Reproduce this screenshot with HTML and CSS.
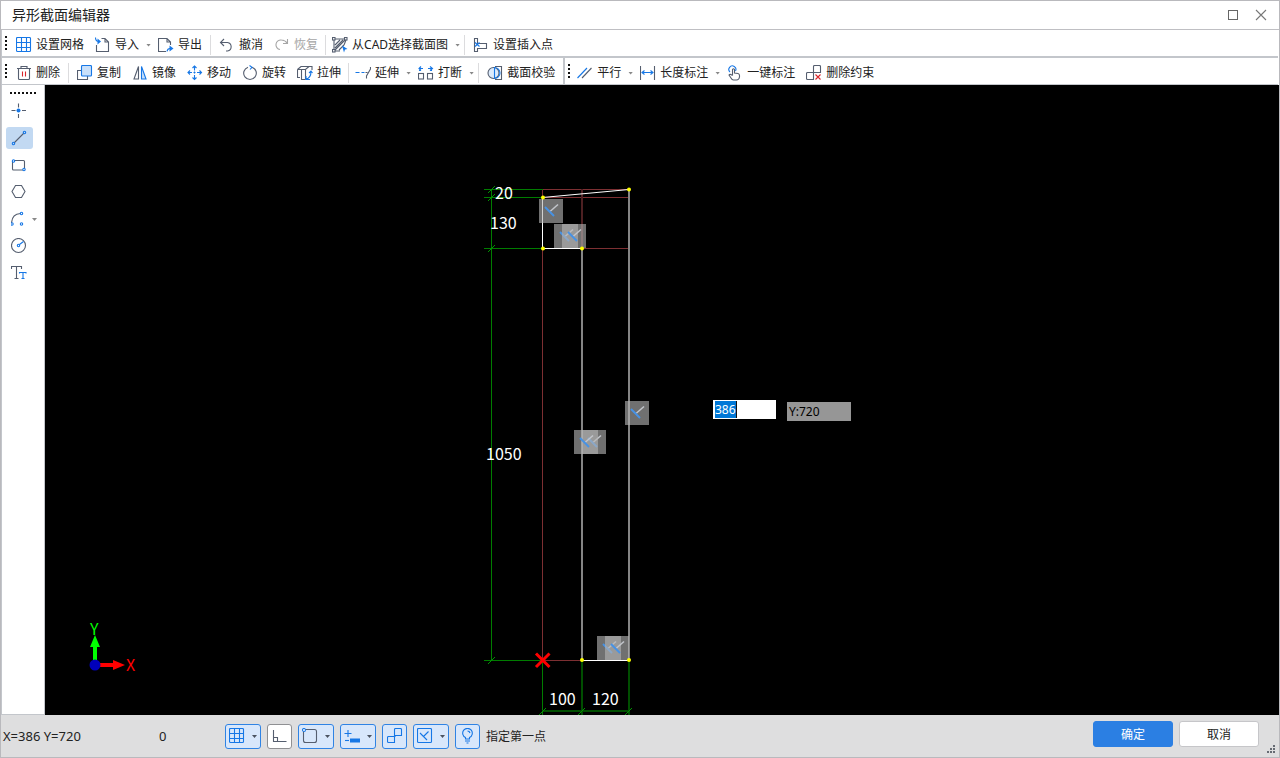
FILE: index.html
```html
<!DOCTYPE html>
<html lang="zh-CN">
<head>
<meta charset="utf-8">
<title>异形截面编辑器</title>
<link rel="stylesheet" href="styles.css">
</head>
<body>
<div class="window">
  <header class="titlebar">
    <h1 class="title">异形截面编辑器</h1>
    <button class="win-btn" aria-label="最大化"><svg width="12" height="12"><rect x="1.5" y="1.5" width="9" height="9" fill="none" stroke="#666"/></svg></button>
    <button class="win-btn" aria-label="关闭"><svg width="12" height="12"><path d="M1 1 11 11M11 1 1 11" fill="none" stroke="#777" stroke-width="1.1"/></svg></button>
  </header>

  <div class="toolbar-row">
    <div class="toolbar">
      <span class="grip"></span>
      <button class="tool"><svg class="icon blue" viewBox="0 0 16 16"><rect x=".5" y=".5" width="14" height="14" rx="1"/><path d="M5.500 .5v14M10.500 .5v14M.500 5.500h14M.500 10.500h14"/></svg>设置网格</button>
      <button class="tool drop"><svg class="icon" viewBox="0 0 16 16"><path d="M6.500 1.500H10L13.500 5V14.500H1.500V8M10 1.500V5H13.500"/><path class="blue" d="M.500 .5Q.5 4.500 4 4.500"/><path class="blue-fill" d="M2.500 1.500 6 4.500 2.500 7.500Z"/></svg>导入<i class="arrow"></i></button>
      <button class="tool"><svg class="icon" viewBox="0 0 16 16"><path d="M8 14.500H.500V1.500H9L12.500 5V8M9 1.500V5H12.500"/><path class="blue" d="M9 14.500Q9.500 11.500 12 11.500"/><path class="blue-fill" d="M11.500 8.500 15.500 11.500 11.500 14.500Z"/></svg>导出</button>
      <span class="sep"></span>
      <button class="tool"><svg class="icon" viewBox="0 0 16 16"><path d="M5 2 1.500 5.500 5 9M1.500 5.500H8.500A4.300 4.300 0 0 1 8.500 14H7"/></svg>撤消</button>
      <button class="tool" disabled><svg class="icon" viewBox="0 0 16 16"><path d="M13.500 2V6.500H9M13.500 6.500Q11 3 7.500 3A4.800 4.800 0 0 0 6 12.500"/></svg>恢复</button>
      <span class="sep tight"></span>
      <button class="tool drop"><svg class="icon" viewBox="0 0 16 16"><path d="M3 2H13M2 3V13M13 3 3 13M14 3 12 8M3 14H8M3 8 8 3M3 11 11 3M7 13 12 8"/><rect x=".5" y=".5" width="2.500" height="2.500"/><rect x="12.500" y=".5" width="2.500" height="2.500"/><rect x=".5" y="12.500" width="2.500" height="2.500"/><path class="blue-fill" d="M10 8.500 15.500 12 13 12.500 12 15.500Z"/></svg>从CAD选择截面图<i class="arrow"></i></button>
      <span class="sep"></span>
      <button class="tool"><svg class="icon" viewBox="0 0 16 16"><path d="M1.500 1.500h3v5h9v5h-9v3h-3z"/><path class="blue" d="M2 5.500 6.500 9.500M6.500 5.500 2 9.500"/></svg>设置插入点</button>
    </div>
  </div>

  <div class="toolbar-row">
    <div class="toolbar bordered">
      <span class="grip"></span>
      <button class="tool"><svg class="icon" viewBox="0 0 16 16"><path d="M1 3.500H15M5 3.500V1.500H11V3.500M2.500 3.500V13.500Q2.500 14.500 3.500 14.500H12.500Q13.500 14.500 13.500 13.500V3.500"/><path class="red" d="M6.500 6.500v5M9.500 6.500v5"/></svg>删除</button>
      <span class="sep"></span>
      <button class="tool"><svg class="icon" viewBox="0 0 16 16"><path d="M4.500 5.500H.500V14.500H10.500V11"/><rect class="blue pale" x="4.500" y=".5" width="10" height="10.500" rx="1"/></svg>复制</button>
      <button class="tool"><svg class="icon" viewBox="0 0 16 16"><path d="M6.500 1.500V14H2Z"/><path class="pale blue" d="M9.500 1.500V14H14Z"/></svg>镜像</button>
      <button class="tool"><svg class="icon blue" viewBox="0 0 16 16"><path d="M7.500 1V5.500M7.500 10V14.500M1 7.500H5M10 7.500H14.500M5.500 3 7.500 1 9.500 3M5.500 12.500 7.500 14.500 9.500 12.500M3 5.500 1 7.500 3 9.500M12.500 5.500 14.500 7.500 12.500 9.500"/><path d="M6.500 7.500h2M7.500 6.500v2"/></svg>移动</button>
      <button class="tool"><svg class="icon" viewBox="0 0 16 16"><path d="M6 2.200A6.300 6.300 0 1 0 10 2.200"/><path class="blue" d="M7.500 .5 10 2.300 8 4.500"/></svg>旋转</button>
      <button class="tool"><svg class="icon" viewBox="0 0 16 16"><path d="M.500 4.500 4 1.500H15V5M.500 4.500H8.500L12 1.500M.500 4.500V12.500H3M8.500 4.500V14.500M4.500 4.500V14.500H8.500"/><path class="blue" d="M9 14Q14 13 14 6.500M12 8 14 6 15.500 8M9 11V14.500H13"/></svg>拉伸</button>
      <span class="sep tight"></span>
      <button class="tool drop"><svg class="icon" viewBox="0 0 16 16"><path class="blue" d="M.500 7.500h4M6.500 7.500h3"/><path d="M10.500 7.500h2M15.500 2V4L11.500 11V13.500"/></svg>延伸<i class="arrow"></i></button>
      <button class="tool drop"><svg class="icon" viewBox="0 0 16 16"><rect x=".5" y="8.500" width="5" height="5.500"/><rect x="9.500" y="8.500" width="5" height="5.500"/><path class="blue" d="M1.500 6V3.500H5M3 1.500 1 3.500 3 5.500M13.500 6V3.500H10M12 1.500 14.500 3.500 12 5.500"/></svg>打断<i class="arrow"></i></button>
      <span class="sep"></span>
      <button class="tool"><svg class="icon" viewBox="0 0 16 16"><path d="M8 1.500H14.500V14.500H8"/><circle class="pale-fill" cx="6.500" cy="8" r="5.500"/><path class="blue" d="M7.500 2.500A5.500 5.500 0 0 1 7.500 13.500Z"/></svg>截面校验</button>
    </div>
    <div class="toolbar">
      <span class="grip"></span>
      <button class="tool drop"><svg class="icon" viewBox="0 0 16 16"><path class="blue" d="M.500 13 10 3"/><path d="M5 13 14.500 3"/></svg>平行<i class="arrow"></i></button>
      <button class="tool drop"><svg class="icon" viewBox="0 0 16 16"><path d="M.500 1v14M14.500 1v14"/><path class="blue" d="M2 7.500H13M4.500 5.500 2 7.500 4.500 9.500M10.500 5.500 13 7.500 10.500 9.500"/></svg>长度标注<i class="arrow"></i></button>
      <button class="tool"><svg class="icon" viewBox="0 0 16 16"><path class="blue" d="M3 7A3.500 3.500 0 1 1 8.500 6"/><path d="M5.500 10.500V4.500Q6.500 3 7.500 4.500V8L11 8.500Q12.500 9 12.500 10.500V12Q12 15 9.500 15H6.500Q5 15 4 13L2 10Q3 8.500 5.500 10.500"/></svg>一键标注</button>
      <button class="tool"><svg class="icon" viewBox="0 0 16 16"><path d="M7.500 7.500V1.500Q7.500 .5 8.500 .5H13.500Q14.500 .5 14.500 1.500V7.500H1.500Q.500 7.500 .500 8.500V13.500Q.500 14.500 1.500 14.500H7.500V7.500"/><path class="red" d="M9.500 9.500 14.500 14.500M14.500 9.500 9.500 14.500"/></svg>删除约束</button>
    </div>
  </div>

  <main class="workspace">
    <nav class="sidebar" aria-label="绘图工具">
      <span class="grip-h"></span>
      <button class="side-tool" aria-label="点"><svg class="icon" viewBox="0 0 16 16"><path d="M.500 7.500h4M11 7.500h4M7.500 .5v4M7.500 11v4"/><circle class="blue-fill" cx="7.500" cy="7.500" r="2"/></svg></button>
      <button class="side-tool active" aria-label="直线"><svg class="icon" viewBox="0 0 16 16"><path d="M3 13 13 3"/><g class="blue"><circle cx="2.500" cy="13.500" r="1.200"/><circle cx="13.500" cy="2.500" r="1.200"/></g></svg></button>
      <button class="side-tool" aria-label="矩形"><svg class="icon" viewBox="0 0 16 16"><rect x="1.500" y="3.500" width="12" height="9.500" rx="1"/><g class="blue node"><circle cx="2.500" cy="4" r="1.200"/><circle cx="13" cy="12.500" r="1.200"/></g></svg></button>
      <button class="side-tool" aria-label="多边形"><svg class="icon" viewBox="0 0 16 16"><path d="M4.500 1.500H10.500L14 7.500 10.500 13.500H4.500L1 7.500Z"/></svg></button>
      <button class="side-tool" aria-label="圆弧"><svg class="icon" viewBox="0 0 16 16"><path d="M.5 12Q1 3 9.500 2.500"/><g class="blue"><circle cx="1" cy="13" r="1.200"/><circle cx="10.500" cy="2.500" r="1.200"/><circle cx="10.500" cy="13" r="1.200"/></g></svg><i class="arrow side-arrow"></i></button>
      <button class="side-tool" aria-label="圆"><svg class="icon" viewBox="0 0 16 16"><circle cx="7.500" cy="7.500" r="7"/><path class="blue" d="M8.500 6.500 12.500 3.500"/><circle class="blue" cx="7.500" cy="7.500" r="1.200"/></svg></button>
      <button class="side-tool" aria-label="文字"><svg class="icon" viewBox="0 0 16 16"><path d="M.500 4V1.500H10.500V4M5.500 1.500V13.500M3.500 13.500h4"/><path class="blue" d="M8.500 8.500V7.500H15V8.500M12 7.500V13.500M10.500 13.500h3"/></svg></button>
    </nav>

    <section class="canvas" aria-label="截面画布">
      <svg class="drawing" width="100%" height="100%">
        <defs>
          <g id="perp"><rect width="24" height="24" fill="#b4b4b4" fill-opacity=".62"/><path d="M11 12.500 19 5.500" stroke="#c3c6cc" stroke-width="1.500"/><path d="M6 8 15 17" stroke="#4792e4" stroke-width="2"/></g>
        </defs>
        <g transform="translate(-45 -85)">
          <g stroke="#7d2f32" fill="none">
            <path d="M542.500 189.500H629M542.500 197.500H629M542.500 248.500H629M542.500 189V660M542.500 660.500H582"/>
            <path d="M582 189V248" stroke="#4d2022" stroke-width="2"/>
          </g>
          <g stroke="#007d00" fill="none">
            <path d="M484 189.500H543M484 197.500H543M484 248.500H543M484 660.500H543M491.500 189V660M542.500 660V715"/>
            <path d="M582 660V715M629 660V715M542 711H629" stroke="#004e00" stroke-width="2"/>
            <path d="M488 193 495 186M488 201 495 194M488 252 495 245M488 664 495 657M539 715 546 708M578 715 585 708M625 715 632 708" stroke="#009400"/>
          </g>
          <g fill="none" stroke="#858585" stroke-width="2"><path d="M582 248V660M629 189V660"/></g>
          <path d="M582 248.500H542.500V197.500L629 189.500M582 660.500H629" fill="none" stroke="#fff"/>
          <use href="#perp" x="539" y="199"/>
          <use href="#perp" x="554" y="224"/><use href="#perp" x="562" y="224"/>
          <use href="#perp" x="625" y="401"/>
          <use href="#perp" x="582" y="430"/><use href="#perp" x="574" y="430"/>
          <use href="#perp" x="597" y="636"/><use href="#perp" x="605" y="636"/>
          <g fill="#ff0"><circle cx="543" cy="197.500" r="2"/><circle cx="629" cy="189.500" r="2"/><circle cx="543" cy="248.500" r="2"/><circle cx="582" cy="248.500" r="2"/><circle cx="582" cy="660" r="2"/><circle cx="629" cy="660" r="2"/></g>
          <path d="M536 653.500 549.500 667M549.500 653.500 536 667" stroke="#f00" stroke-width="3"/>
          <g class="dims"><text x="495" y="199">20</text><text x="490" y="229">130</text><text x="486" y="460">1050</text><text x="549" y="705">100</text><text x="592" y="705">120</text></g>
          <path d="M93 660V647H90L95 635 100 647H97V660Z" fill="#0f0"/>
          <path d="M99 663V667H113V670L125 665 113 660V663Z" fill="#f00"/>
          <circle cx="95" cy="665" r="5.500" fill="#00b"/>
          <text class="axis" x="90" y="635" fill="#0f0">Y</text><text class="axis" x="126" y="671" fill="#f00">X</text>
        </g>
      </svg>
      <div class="coord-x"><input class="coord-input" aria-label="X坐标" value="386"></div>
      <output class="coord-y">Y:720</output>
    </section>
  </main>

  <footer class="statusbar">
    <span class="position">X=386 Y=720</span>
    <span class="angle">0</span>
    <div class="toggles">
      <button class="toggle wide" aria-label="网格"><svg class="icon blue" viewBox="0 0 16 16"><rect x=".5" y=".5" width="14" height="14" rx="1"/><path d="M5.500 .5v14M10.500 .5v14M.500 5.500h14M.500 10.500h14"/></svg><i class="arrow"></i></button>
      <button class="toggle off" aria-label="正交"><svg class="icon" viewBox="0 0 16 16"><path d="M1.500 2V13.500H14.500M1.500 9.500H5.500V13.500"/></svg></button>
      <button class="toggle wide" aria-label="捕捉"><svg class="icon" viewBox="0 0 16 16"><rect x="1.500" y="1.500" width="13" height="13" rx="2"/><circle class="blue node" cx="2" cy="2" r="1.500"/></svg><i class="arrow"></i></button>
      <button class="toggle wide" aria-label="动态输入"><svg class="icon blue" viewBox="0 0 16 16"><path d="M.500 5.500h7M4 2v7"/><path d="M1 12.500h4"/><rect class="blue-fill" x="6" y="10.500" width="10" height="4"/></svg><i class="arrow"></i></button>
      <button class="toggle" aria-label="约束"><svg class="icon blue" viewBox="0 0 16 16"><path d="M7.500 8.500V1.500Q7.500 .5 8.500 .5H13.500Q14.500 .5 14.500 1.500V7.500H7.500M8.500 8.500H1.500Q.500 8.500 .500 9.500V13.500Q.500 14.500 1.500 14.500H7.500V8.500"/></svg></button>
      <button class="toggle wide" aria-label="约束显示"><svg class="icon blue" viewBox="0 0 16 16"><rect x=".5" y=".5" width="14" height="14" rx="1"/><path d="M3 5 10 12M6.500 8.500 11.500 3.500"/></svg><i class="arrow"></i></button>
      <button class="toggle" aria-label="提示"><svg class="icon blue" viewBox="0 0 16 16"><path d="M5.500 11V9.500A4.800 4.800 0 1 1 9.500 9.500V11ZM7.500 3Q9.500 3 10 5M5 13h5M6.500 15h2"/></svg></button>
    </div>
    <span class="hint">指定第一点</span>
    <div class="actions"><button class="btn primary">确定</button><button class="btn">取消</button></div>
    <svg class="resize" width="10" height="10" fill="#666b73"><path d="M6 0h2v2h-2zM3 3h2v2h-2zM6 3h2v2h-2zM0 6h2v2h-2zM3 6h2v2h-2zM6 6h2v2h-2z"/></svg>
  </footer>
</div>
</body>
</html>
```
FILE: styles.css
```css
* { box-sizing: border-box; }
body { margin: 0; font-family: "Noto Sans", "Noto Sans CJK SC", sans-serif; font-size: 12px; color: #222; }
button, input { font: inherit; color: inherit; margin: 0; }
button { border: 0; background: none; padding: 0; }

.window { display: flex; flex-direction: column; height: 100vh; min-height: 400px; border: 1px solid #b9b9bd; background: #fff; }
.titlebar { display: flex; align-items: center; height: 29px; padding: 0 12px 0 11px; gap: 16px; border-bottom: 1px solid #bfbfc3; }
.title { flex: 1; margin: 0; font-size: 14px; line-height: 20px; font-weight: 400; }
.win-btn { width: 12px; height: 12px; line-height: 0; }

.toolbar-row { display: flex; height: 28px; border-bottom: 2px solid #c3c6cb; border-left: 1px solid #c3c6cb; margin-right: 1px; }
.toolbar-row + .toolbar-row { height: 27px; border-bottom-width: 1px; }
.toolbar { display: flex; align-items: center; padding: 3px 0 0 3px; }
.toolbar.bordered { border-right: 2px solid #c3c6cb; }
.grip { width: 2px; height: 14px; margin: 0 9px 3px 0; background: repeating-linear-gradient(#111 0 2px, transparent 2px 4px); }
.bordered + .toolbar .grip { margin-right: 7px; }
.tool { display: flex; align-items: center; margin-right: 11px; line-height: 18px; white-space: nowrap; }
.tool .icon { margin-right: 4px; }
.tool.drop { margin-right: 7px; }
.bordered .tool:last-child { margin-right: 8px; }
.tool:disabled { color: #a6a6a6; }
.tool:disabled .icon { stroke: #a6a6a6; }
.sep { width: 1px; height: 20px; margin: 0 8px 0 -3px; background: #dcdcde; }
.sep.tight { margin: 0 6px 0 -4px; }
.arrow { width: 5px; height: 3px; margin: 1px 0 0 7px; background: #888; clip-path: polygon(0 0, 100% 0, 50% 100%); }

.icon { width: 16px; height: 16px; flex: none; fill: none; stroke: #555e6f; stroke-width: 1.1; }
.blue { stroke: #1677e6; }
.red { stroke: #d9242b; }
.blue-fill { fill: #1677e6; stroke: none; }
.pale { fill: #c9e0fa; }
.pale-fill { fill: #dcebfc; }
.node { fill: #fff; }

.workspace { flex: 1; display: flex; min-height: 0; }
.sidebar { display: flex; flex-direction: column; gap: 5px; width: 44px; padding: 7px 0 0 4px; border: 1px solid #c3c6cb; border-width: 0 1px 1px; }
.grip-h { width: 26px; height: 2px; margin: 0 0 1px 4px; background: repeating-linear-gradient(90deg, #111 0 2px, transparent 2px 4px); }
.side-tool { position: relative; display: flex; align-items: center; justify-content: center; width: 27px; height: 22px; padding-right: 1px; border-radius: 3px; }
.side-tool.active { background: #c2d9f2; }
.side-arrow { position: absolute; left: 19px; top: 9px; }

.canvas { position: relative; flex: 1; overflow: hidden; background: #000; }
.drawing { display: block; }
.drawing text { font-family: "Noto Sans CJK SC", sans-serif; }
.dims { font-size: 16px; fill: #fff; }
.axis { font-size: 16px; font-weight: 400; }
.coord-x { position: absolute; left: 668px; top: 315px; width: 63px; height: 19px; padding: 1px 2px; background: #fff; }
.coord-input { width: 22px; height: 17px; padding: 0; border: 0; border-right: 1px solid #111; background: #0078d7; color: #fff; line-height: 17px; }
.coord-y { position: absolute; left: 742px; top: 317px; width: 64px; height: 19px; padding: 0 2px; background: #969696; color: #000; line-height: 19px; }

.statusbar { position: relative; display: flex; align-items: center; height: 42px; padding: 0 20px 0 2px; background: #dededf; }
.position { width: 156px; font-size: 13px; }
.angle { width: 66px; font-size: 13px; }
.toggles { display: flex; gap: 6px; }
.toggle { display: flex; align-items: center; justify-content: center; width: 25px; height: 25px; border: 1px solid #2f83e4; border-radius: 3px; background: #d8e7fb; }
.toggle.wide { width: 36px; justify-content: flex-start; padding-left: 3px; }
.toggle.off { border-color: #8f9093; background: #fff; }
.toggle .arrow { background: #4b5360; }
.hint { margin-left: 6px; }
.actions { display: flex; gap: 6px; margin-left: auto; padding-bottom: 4px; }
.btn { width: 80px; height: 26px; border: 1px solid #c6c6c9; border-radius: 3px; background: #fff; }
.btn.primary { border-color: #2b7fe3; background: #2b7fe3; color: #fff; }
.resize { position: absolute; right: 2px; bottom: 2px; }
```
